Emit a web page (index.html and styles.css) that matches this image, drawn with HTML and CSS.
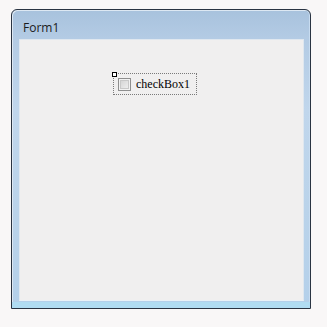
FILE: index.html
```html
<!DOCTYPE html>
<html>
<head>
<meta charset="utf-8">
<link rel="stylesheet" href="styles.css">
</head>
<body>
<div class="window">
  <div class="titlebar"><span class="title">Form1</span></div>
  <div class="frame">
    <div class="client">
      <div class="control">
        <span class="handle"></span>
        <span class="checkbox"></span>
        <span class="label">checkBox1</span>
      </div>
    </div>
  </div>
</div>
</body>
</html>
```
FILE: styles.css
```css
html, body {
  margin: 0;
  padding: 0;
  background: #f9f7f7;
}
body {
  width: 327px;
  height: 327px;
  overflow: hidden;
}
.window {
  margin: 9px 0 0 11px;
  width: 298px;
  height: 298px;
  border: 1px solid #2a3442;
  border-radius: 6px 6px 0 0;
  display: flex;
  flex-direction: column;
  background: linear-gradient(to bottom, #a8c2dd 0px, #b3cbe4 28px, #c0d6ec 100px, #bad3ea 200px, #b4d0ea 100%);
  box-shadow: inset 1px 1px 0 #dde8f3, inset -1px 0 0 #c8dcf0;
  overflow: hidden;
}
.titlebar {
  height: 29px;
  box-sizing: border-box;
  padding: 8px 0 0 11px;
}
.title {
  font-family: "Open Sans", "Noto Sans", sans-serif;
  font-size: 12px;
  color: #1b1b1b;
  line-height: 16px;
}
.frame {
  flex: 1;
  display: flex;
  padding: 0 6px 7px 7px;
  box-shadow: inset 0 -6px 0 #b0dcf2;
}
.client {
  flex: 1;
  background: #f0efef;
  border: 1px solid #dfe7ef;
  border-bottom-color: #e9f1f7;
  padding: 33px 0 0 93px;
}
.control {
  position: relative;
  width: 78px;
  height: 20px;
  border: 1px dotted #7a7a7a;
  display: flex;
  align-items: center;
  padding-left: 4px;
  box-sizing: content-box;
}
.handle {
  position: absolute;
  left: -2px;
  top: -2px;
  width: 3px;
  height: 3px;
  border: 1px solid #000;
  background: #fff;
}
.checkbox {
  width: 11px;
  height: 11px;
  border: 1px solid #8f8f8f;
  background: linear-gradient(135deg, #cfcfcf, #f4f4f4);
  box-shadow: inset 0 0 0 1px #f2f2f2, inset 0 0 0 2px #c8c8c8;
  flex: none;
}
.label {
  margin-left: 5px;
  font-family: "Liberation Serif", "DejaVu Serif", serif;
  font-size: 12px;
  color: #000;
  line-height: 14px;
}
```
